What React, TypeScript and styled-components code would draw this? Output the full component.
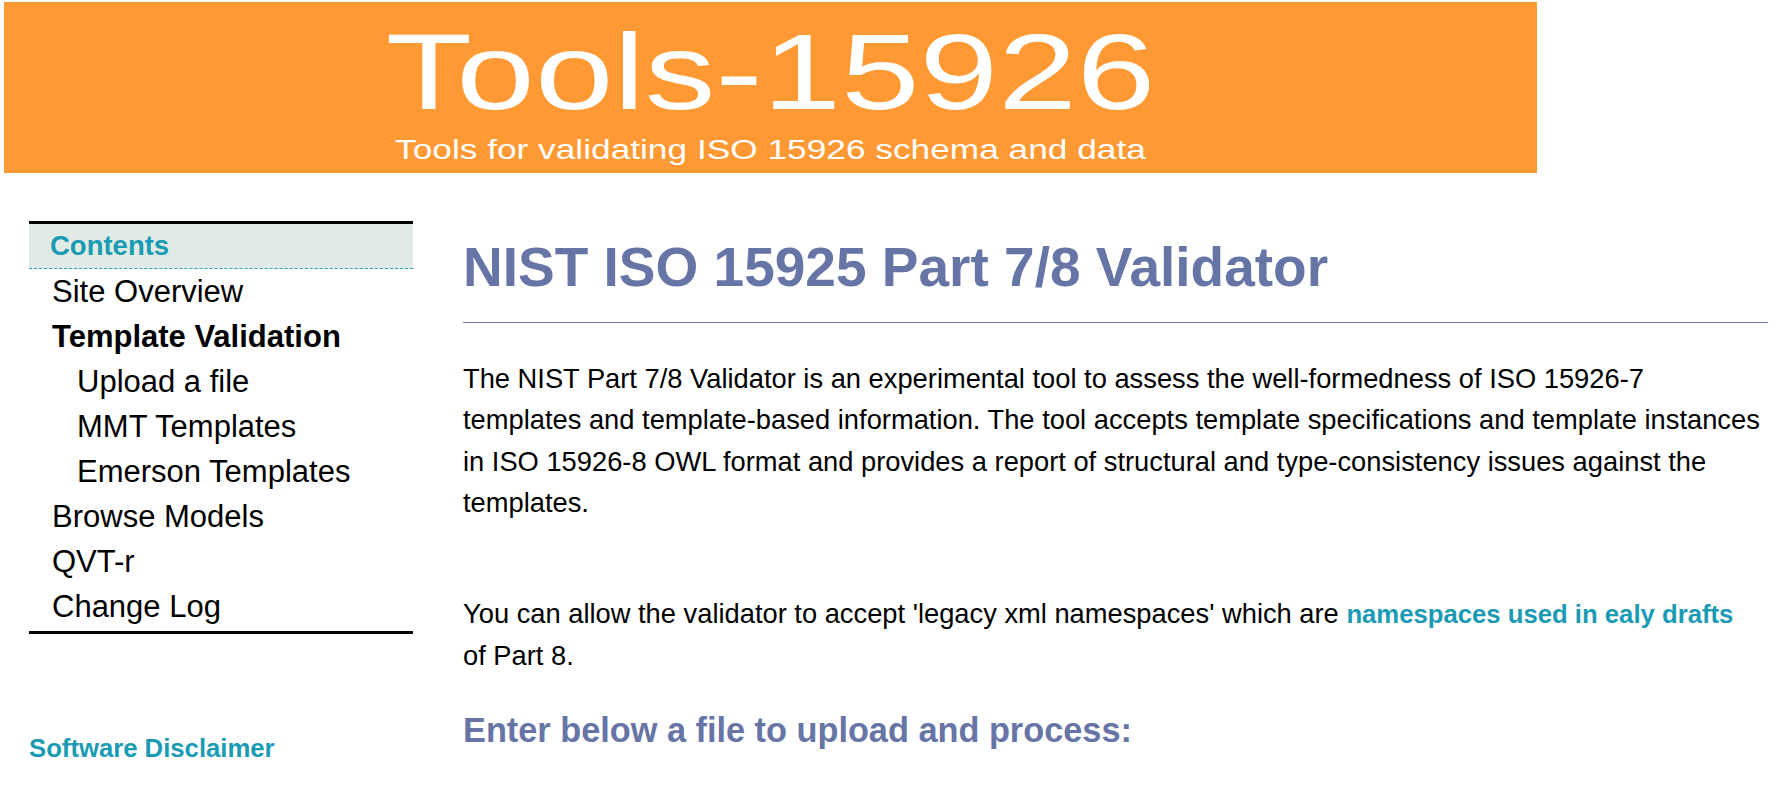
import React from "react";
import styled, { createGlobalStyle } from "styled-components";

const GlobalStyle = createGlobalStyle`
  html, body {
    margin: 0;
    padding: 0;
    background: #ffffff;
  }
  body {
    font-family: "Liberation Sans", Arial, Helvetica, sans-serif;
    color: #000000;
  }
`;

const Page = styled.div`
  width: 1785px;
`;

const Banner = styled.header`
  margin: 2px 0 0 4px;
  width: 1533px;
  height: 171px;
  box-sizing: border-box;
  padding-top: 17px;
  background: #ff9933;
  color: #ffffff;
  display: flex;
  flex-direction: column;
  align-items: center;
`;

const BannerText = styled.div<{ $size: number; $stretch: number; $gap: number }>`
  display: inline-block;
  margin-top: ${(p) => p.$gap}px;
  font-size: ${(p) => p.$size}px;
  line-height: ${(p) => p.$size}px;
  font-weight: normal;
  white-space: nowrap;
  transform: scaleX(${(p) => p.$stretch});
  transform-origin: center;
`;

const Columns = styled.div`
  display: flex;
  align-items: flex-start;
`;

const Sidebar = styled.aside`
  flex: none;
  width: 384px;
  margin: 48px 0 0 29px;
`;

const Menu = styled.nav`
  border-top: 3px solid #000000;
  border-bottom: 3px solid #000000;
  padding-bottom: 2px;
`;

const MenuTitle = styled.div`
  background: #e1ebe6;
  border-bottom: 1px dashed #2aa3b3;
  padding-left: 21px;
  font-size: 27.5px;
  line-height: 44px;
  font-weight: bold;
  color: #1a9bb3;
`;

const MenuItem = styled.div<{ $indent?: boolean; $current?: boolean }>`
  padding-left: ${(p) => (p.$indent ? 48 : 23)}px;
  font-size: 31px;
  line-height: 45px;
  font-weight: ${(p) => (p.$current ? "bold" : "normal")};
  color: #000000;
  white-space: nowrap;
`;

const Disclaimer = styled.a`
  display: block;
  margin-top: 99px;
  font-size: 25.7px;
  line-height: 30px;
  font-weight: bold;
  color: #1a9bb3;
  text-decoration: none;
`;

const Main = styled.main`
  flex: none;
  width: 1305px;
  margin-left: 50px;
`;

const Title = styled.h1`
  margin: 61px 0 0;
  padding-bottom: 22px;
  border-bottom: 1px solid #6675a6;
  font-size: 55px;
  line-height: 66px;
  font-weight: bold;
  color: #6675a6;
`;

const Para = styled.p<{ $top: number }>`
  max-width: 1299px;
  margin: ${(p) => p.$top}px 0 0;
  font-size: 27.3px;
  line-height: 41.3px;
`;

const Link = styled.a`
  font-size: 25.7px;
  font-weight: bold;
  color: #1a9bb3;
  text-decoration: none;
`;

const SubHeading = styled.h2`
  margin: 33.5px 0 0;
  font-size: 34.3px;
  line-height: 40.8px;
  font-weight: bold;
  color: #6675a6;
`;

const menu = [
  { label: "Site Overview" },
  { label: "Template Validation", current: true },
  { label: "Upload a file", indent: true },
  { label: "MMT Templates", indent: true },
  { label: "Emerson Templates", indent: true },
  { label: "Browse Models" },
  { label: "QVT-r" },
  { label: "Change Log" },
];

export default function App() {
  return (
    <Page>
      <GlobalStyle />
      <Banner>
        <BannerText $size={107} $stretch={1.32} $gap={0}>
          Tools-15926
        </BannerText>
        <BannerText $size={27} $stretch={1.306} $gap={11}>
          Tools for validating ISO 15926 schema and data
        </BannerText>
      </Banner>
      <Columns>
        <Sidebar>
          <Menu>
            <MenuTitle>Contents</MenuTitle>
            {menu.map((m) => (
              <MenuItem key={m.label} $indent={m.indent} $current={m.current}>
                {m.label}
              </MenuItem>
            ))}
          </Menu>
          <Disclaimer href="#">Software Disclaimer</Disclaimer>
        </Sidebar>
        <Main>
          <Title>NIST ISO 15925 Part 7/8 Validator</Title>
          <Para $top={35}>
            The NIST Part 7/8 Validator is an experimental tool to assess the
            well-formedness of ISO 15926-7 templates and template-based
            information. The tool accepts template specifications and template
            instances in ISO 15926-8 OWL format and provides a report of
            structural and type-consistency issues against the templates.
          </Para>
          <Para $top={70}>
            You can allow the validator to accept 'legacy xml namespaces' which
            are <Link href="#">namespaces used in ealy drafts</Link> of Part 8.
          </Para>
          <SubHeading>Enter below a file to upload and process:</SubHeading>
        </Main>
      </Columns>
    </Page>
  );
}
